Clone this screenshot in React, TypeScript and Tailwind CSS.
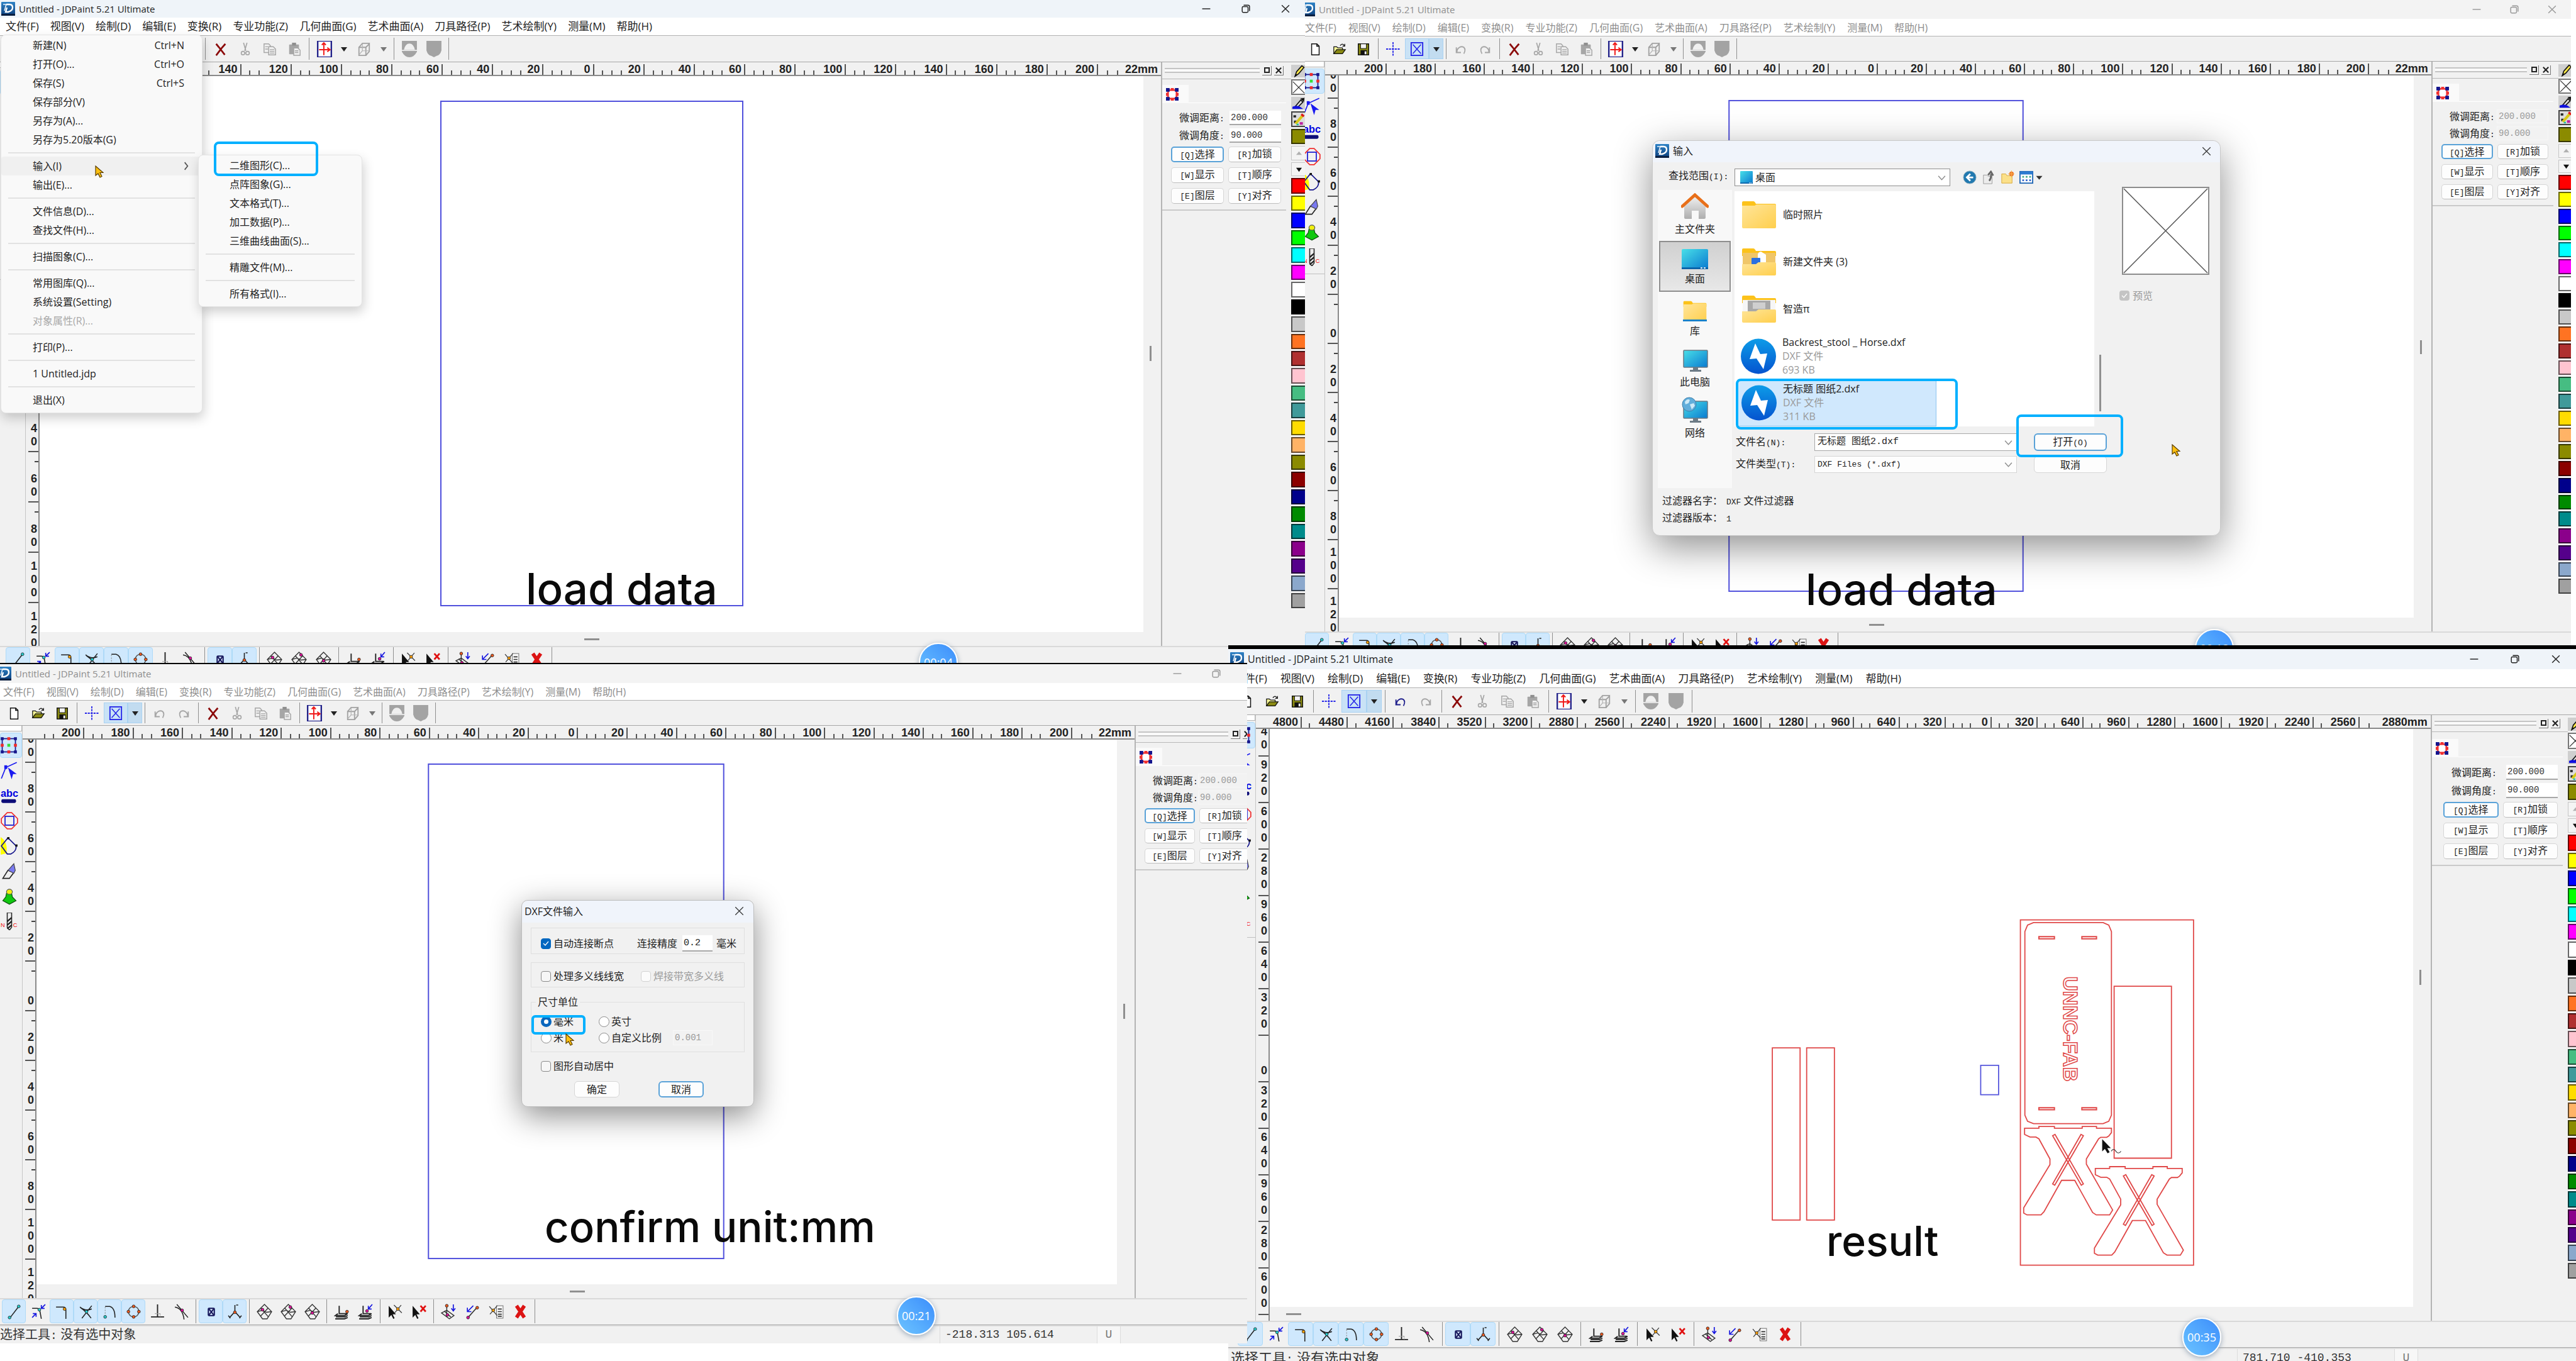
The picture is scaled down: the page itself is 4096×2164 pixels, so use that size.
import React, { ReactNode } from "react";

/* ---------- fonts ---------- */

const UI = "font-['Open_Sans','Noto_Sans_CJK_SC',sans-serif]";
const SIM = "font-['Liberation_Sans','Noto_Sans_CJK_SC',sans-serif]";

const Mono = ({ children, big }: { children: ReactNode; big?: boolean }) => (
  <span className={`font-['Liberation_Mono',monospace] ${big ? "text-[18px]" : "text-[13px]"}`}>{children}</span>
);

/* ---------- icons ---------- */

const Svg = ({ size, children, className = "" }: { size: number; children: ReactNode; className?: string }) => (
  <svg width={size} height={size} viewBox="0 0 24 24" fill="none" className={`shrink-0 ${className}`} aria-hidden="true">
    {children}
  </svg>
);

const Logo = () => (
  <svg width="22" height="22" viewBox="0 0 22 22" className="shrink-0" aria-hidden="true">
    <defs>
      <linearGradient id="logo" x1="0" y1="0" x2="0" y2="1">
        <stop offset="0" stopColor="#2f83c6" />
        <stop offset="1" stopColor="#0d3f7c" />
      </linearGradient>
    </defs>
    <rect width="22" height="22" rx="1" fill="url(#logo)" />
    <path d="M8 4h5q5 0 5 5t-7 7H7l2-7" fill="none" stroke="#fff" strokeWidth="2.400" />
    <path d="M3 4h5L5 14" fill="none" stroke="#e8f2fb" strokeWidth="1.600" />
    <rect y="19" width="22" height="3" fill="#0a1f40" />
  </svg>
);

const Pointer = ({ className = "" }: { className?: string }) => (
  <svg width="14" height="20" viewBox="0 0 14 20" className={`absolute ${className}`} aria-hidden="true">
    <path d="M1 1v15l4-3 3 6 3-1.500-3-6h5z" fill="#fdc010" stroke="#5a3d00" strokeWidth="1.200" />
  </svg>
);

const topIcons: Record<string, ReactNode> = {
  new: (
    <>
      <path d="M5 3h9l4 4v15H5z" fill="#fff" stroke="#111" strokeWidth="1.600" />
      <path d="M14 3v4h4" stroke="#111" strokeWidth="1.600" />
    </>
  ),
  open: (
    <>
      <path d="M2 20V8h5l2 2h8v3" fill="#ffff9a" stroke="#111" strokeWidth="1.400" />
      <path d="M2 20l5-7h15l-5 7z" fill="#8b8b12" stroke="#111" strokeWidth="1.400" />
      <path d="M13 6q4-5 7 0m1-3v4h-4" stroke="#111" strokeWidth="1.400" />
    </>
  ),
  save: (
    <>
      <rect x="3" y="3" width="18" height="19" fill="#8b8b12" stroke="#111" strokeWidth="1.600" />
      <rect x="7" y="3" width="10" height="8" fill="#f4f4f4" stroke="#111" />
      <rect x="7" y="14" width="11" height="8" fill="#111" />
      <rect x="14" y="16" width="3" height="5" fill="#f4f4f4" />
    </>
  ),
  cross: <path d="M12 0v24M0 12h24" stroke="#2424e8" strokeWidth="2" strokeDasharray="3.500 1.500" />,
  box: (
    <>
      <rect x="2" y="1" width="20" height="22" stroke="#2424e8" strokeWidth="2" />
      <path d="M5 4l14 16M19 4L5 20" stroke="#2424e8" strokeWidth="1.600" />
    </>
  ),
  undo: <path d="M4 9v9h8M5 17C5 10 12 6 17 9q4 4 0 11" stroke="currentColor" strokeWidth="2" />,
  redo: <path d="M20 9v9h-8M19 17C19 10 12 6 7 9q-4 4 0 11" stroke="currentColor" strokeWidth="2" />,
  del: <path d="M4 3l5 6 10 13M20 3l-7 8-9 12" stroke="#8b0a0a" strokeWidth="3" />,
  cut: (
    <>
      <path d="M9 1l4 14M15 1l-4 14" stroke="#a6a6a6" strokeWidth="1.800" />
      <circle cx="8" cy="19" r="3" stroke="#a6a6a6" strokeWidth="1.800" />
      <circle cx="16" cy="19" r="3" stroke="#a6a6a6" strokeWidth="1.800" />
    </>
  ),
  copy: (
    <>
      <path d="M2 3h8l3 3v12H2z" fill="#f0f0f0" stroke="#a6a6a6" strokeWidth="1.600" />
      <path d="M10 8h8l4 4v10H10z" fill="#f0f0f0" stroke="#a6a6a6" strokeWidth="1.600" />
      <path d="M4 8h5M4 12h5M12 13h8M12 16h8M12 19h8" stroke="#a6a6a6" strokeWidth="1.400" />
    </>
  ),
  paste: (
    <>
      <rect x="3" y="4" width="17" height="17" rx="1" fill="#a6a6a6" />
      <rect x="8" y="1" width="7" height="5" fill="#8f8f8f" />
      <path d="M11 10h7l4 4v9H11z" fill="#f0f0f0" stroke="#a6a6a6" strokeWidth="1.600" />
      <path d="M13 15h6M13 18h6" stroke="#a6a6a6" strokeWidth="1.400" />
    </>
  ),
  view: (
    <>
      <rect x="2" y="0" width="20" height="24" fill="#fff" stroke="#23238a" strokeWidth="2.200" />
      <path d="M11 21V3M8 6l3-3 3 3M4 13h15M16 10l4 3-4 3" stroke="#f01818" strokeWidth="1.800" />
    </>
  ),
  cube: (
    <>
      <path d="M3 9h12v14H3zM15 9l6-6v13l-6 7M3 9l6-7h12" stroke="#a2a2a2" strokeWidth="2" />
      <path d="M9 3v12M9 15h12M9 15l-6 7" stroke="#b4b4b4" strokeWidth="1.300" />
    </>
  ),
  shieldA: (
    <>
      <path d="M1 0h22v16q-4 8-11 8T1 16z" fill="#a3a3a3" />
      <path d="M4 13q2-9 8-9t8 9z" fill="#f0f0f0" />
      <path d="M0 14h24" stroke="#f0f0f0" strokeWidth="1.500" />
    </>
  ),
  shieldB: <path d="M1 0h22v14q-2 7-7 8l-4 2-4-2q-5-1-7-8z" fill="#a3a3a3" />,
};

const Dot = ({ x, y, c }: { x: number; y: number; c: string }) => (
  <circle cx={x} cy={y} r="2.200" fill={c} stroke="#222" strokeWidth="0.800" />
);

const gridLines = <path d="M12 1l11 11-7 11h-7L1 12zM6 6l12 14M18 6L6 19M1 12l8-2 6 3 8-1" stroke="#333" strokeWidth="1.300" />;
const sheet = <path d="M8 3v12h12M6 15l-4 3h14l5-3M3 20h14l4-2M2 23h14l5-2" stroke="#222" strokeWidth="1.800" />;
const blackArrow = <path d="M2 3v18l4-4 3 6 2-1-3-6h5z" fill="#111" />;

const snapIcons: ReactNode[] = [
  <><path d="M6 21L19 4" stroke="#222" strokeWidth="1.500" /><Dot x={19} y={4} c="#25d0d0" /><Dot x={5} y={21} c="#25d0d0" /></>,
  <><path d="M3 7h7q4 0 5 5l2 11" stroke="#222" strokeWidth="1.500" /><Dot x={14} y={9} c="#25d0d0" /><path d="M23 1l-6 6M17 2v5h5M3 21l6-6M4 15h5v5" stroke="#1717e0" strokeWidth="1.600" /></>,
  <><path d="M3 5h11q4 0 4 5v13" stroke="#222" strokeWidth="1.500" /><Dot x={16} y={8} c="#ffa000" /></>,
  <><path d="M3 5q8 7 18 3M21 3L6 22M4 6q9 6 16 16" stroke="#222" strokeWidth="1.500" /><Dot x={13} y={12} c="#25d0d0" /></>,
  <><path d="M5 4h7q8 2 8 17" stroke="#222" strokeWidth="1.500" /><path d="M5 5v15" stroke="#888" strokeDasharray="2 2" /><Dot x={5} y={20} c="#25d0d0" /></>,
  <><circle cx="12" cy="12" r="8" stroke="#555" strokeWidth="1.400" /><Dot x={12} y={4} c="#f05a1e" /><Dot x={12} y={20} c="#f05a1e" /><Dot x={4} y={12} c="#f05a1e" /><Dot x={20} y={12} c="#f05a1e" /></>,
  <><path d="M12 1v19M2 20h20" stroke="#222" strokeWidth="1.800" /><path d="M16 15v5M8 15h8" stroke="#999" strokeDasharray="2 1" /></>,
  <><path d="M2 5q12 2 14 19M5 1l17 20" stroke="#222" strokeWidth="1.400" /><Dot x={13} y={10} c="#e0109a" /></>,
  <><rect x="8" y="7" width="9" height="11" rx="1" fill="#dcecff" stroke="#15155a" strokeWidth="2" /><path d="M9 8l7 9M16 8l-7 9" stroke="#15155a" strokeWidth="2" /></>,
  <><path d="M12 12V2M12 12l-8 9M12 12l8 9M14 2h3M2 18l3 4M22 18l-3 4" stroke="#222" strokeWidth="1.500" /><Dot x={12} y={13} c="#f05a1e" /></>,
  <>{gridLines}<Dot x={9} y={9} c="#e0109a" /></>,
  <>{gridLines}<Dot x={15} y={5} c="#e0109a" /></>,
  <>{gridLines}<Dot x={12} y={14} c="#e0109a" /></>,
  <>{sheet}<Dot x={20} y={12} c="#f05a1e" /></>,
  <>{sheet}<Dot x={14} y={11} c="#e0109a" /><path d="M22 1l-6 7M16 3v5h5" stroke="#1717e0" strokeWidth="1.600" /></>,
  <>{blackArrow}<path d="M10 2l12 12M21 2L11 14" stroke="#444" strokeWidth="1.300" /><Dot x={16} y={8} c="#ffa000" /></>,
  <>{blackArrow}<path d="M14 3l8 9M22 3l-8 9" stroke="#e01010" strokeWidth="2.600" /></>,
  <><path d="M1 14l8-4 11 8-7 5zM9 3v17M5 11l10 9" stroke="#333" strokeWidth="1.400" /><Dot x={9} y={3} c="#f05a1e" /><Dot x={10} y={17} c="#e0109a" /><path d="M19 1v9M16 7l3 4 3-4" stroke="#1717e0" strokeWidth="1.600" /></>,
  <><path d="M5 21L20 4" stroke="#333" strokeWidth="1.500" /><Dot x={5} y={21} c="#e0109a" /><Dot x={19} y={6} c="#f05a1e" /><path d="M13 3L4 12M4 6v6h6" stroke="#1717e0" strokeWidth="1.600" /></>,
  <><rect x="12" y="3" width="10" height="19" fill="#f8f8f8" stroke="#777" /><path d="M14 8h6M14 12h6M14 16h6M14 19h6" stroke="#333" strokeWidth="1.600" /><path d="M1 4l12 14M13 3L2 16" stroke="#444" strokeWidth="1.300" /><Dot x={7} y={10} c="#ffa000" /></>,
  <path d="M6 3l12 18M18 3L6 21" stroke="#dc1414" strokeWidth="5.500" />,
];

const toolIcons: ReactNode[] = [
  <><rect x="3" y="3" width="18" height="18" stroke="#16168c" strokeWidth="1.500" />{[[3, 3], [21, 3], [3, 21], [21, 21]].map(([x, y]) => <rect key={`${x}${y}`} x={x - 2} y={y - 2} width="4" height="4" fill="#16168c" />)}{[[12, 3], [12, 21], [3, 12], [21, 12]].map(([x, y]) => <rect key={`${x}${y}`} x={x - 2} y={y - 2} width="4" height="4" fill="#f02a2a" />)}<rect x="10" y="10" width="4" height="4" fill="#35e035" /></>,
  <><path d="M1 23L7 8 22 1" stroke="#1a1af0" strokeWidth="1.400" /><rect x="5" y="5" width="4" height="5" fill="#1a1af0" /><path d="M10 8l12 9-5 0-2 7z" fill="#1a1af0" /></>,
  <><text x="0" y="14" fontFamily="Liberation Sans" fontWeight="700" fontSize="14" fill="#0000e0">abc</text><rect x="1" y="17" width="20" height="5" rx="2" fill="#0d0d78" /></>,
  <><path d="M9 1h6l8 8v6l-8 8H9l-8-8V9z" stroke="#f03030" strokeWidth="1.500" /><rect x="6" y="6" width="12" height="12" stroke="#1c1cd0" strokeWidth="1.500" /></>,
  <><path d="M0 0q10 6 8 22L0 24z" fill="#ffff00" /><path d="M1 12L10 1l11 11q1 7-7 11h-5z" stroke="#15158c" strokeWidth="1.500" /><rect x="9" y="0" width="3" height="3" fill="#111" /><rect x="20" y="10" width="3" height="3" fill="#111" /></>,
  <><path d="M3 22l7-11 8 3-6 8z" fill="#eee" stroke="#222" strokeWidth="1.400" /><path d="M10 11l8-9 2 9-2 4z" fill="#7a7af0" stroke="#444" /></>,
  <><path d="M8 8h7l1 5 5 5-9 5-9-5 4-5z" fill="#10c810" stroke="#0a500a" /><ellipse cx="12" cy="6" rx="4" ry="3.500" fill="#f0f010" stroke="#555" /></>,
  <><path d="M9 0h6v20l-3 4-3-4z" fill="#eee" stroke="#222" strokeWidth="1.300" /><path d="M9 12l6-5M9 17l6-5M9 22l6-5" stroke="#222" strokeWidth="2" /><text x="0" y="20" fontSize="8" fontFamily="Liberation Sans" fill="#f01010">N</text><text x="17" y="20" fontSize="8" fontFamily="Liberation Sans" fill="#f01010">C</text></>,
];

const palette = [
  "#8b8b00", "up", "down", "#ff0000", "#ffff00", "#0000ff", "#00ff00", "#00ffff", "#ff00ff", "#ffffff", "#000000", "#c8c8c8",
  "#ff7322", "#b03030", "#ffc4d0", "#46bd82", "#409a9a", "#ffdc00", "#ffb366", "#8b8b00", "#8b0000", "#00008b",
  "#008b00", "#008b8b", "#8b008b", "#55008b", "#8ba8cc", "#a0a0a0",
];

/* ---------- window chrome ---------- */

const menus = ["文件(F)", "视图(V)", "绘制(D)", "编辑(E)", "变换(R)", "专业功能(Z)", "几何曲面(G)", "艺术曲面(A)", "刀具路径(P)", "艺术绘制(Y)", "测量(M)", "帮助(H)"];

const TitleBar = ({ active, fade, cls }: { active: boolean; fade: string; cls: string }) => (
  <header className={`flex h-(--title) shrink-0 items-center ${active ? "bg-[#eff4f9]" : "bg-[#f3f3f3]"}`}>
    <div className={`flex items-center ${cls}`}>
      <Logo />
      <h1 className={`ml-[6px] leading-5 whitespace-nowrap ${fade}`}>Untitled - JDPaint 5.21 Ultimate</h1>
    </div>
    <div className={`ml-auto flex h-full ${active ? "text-[#222]" : "text-[#999]"}`}>
      <button aria-label="最小化" className="grid w-(--wb) place-items-center"><Svg size={14}><path d="M1 12h22" stroke="currentColor" strokeWidth="2.500" /></Svg></button>
      <button aria-label="还原" className="grid w-(--wb) place-items-center"><Svg size={14}><rect x="2" y="6" width="16" height="16" rx="3" stroke="currentColor" strokeWidth="2.500" /><path d="M6 2h12q4 0 4 4v12" stroke="currentColor" strokeWidth="2.500" /></Svg></button>
      <button aria-label="关闭" className="grid w-(--wb) place-items-center"><Svg size={14}><path d="M2 2l20 20M22 2L2 22" stroke="currentColor" strokeWidth="2.500" /></Svg></button>
    </div>
  </header>
);

const MenuBar = ({ fade, cls }: { fade: string; cls: string }) => (
  <div className="flex h-(--menu) shrink-0 items-center bg-white">
    <nav className={`flex items-center ${cls} ${fade}`}>
      {menus.map((m) => (
        <button key={m} className="px-[9px] leading-6 whitespace-nowrap">{m}</button>
      ))}
    </nav>
  </div>
);

const Sep = () => (
  <span className="grid h-full w-(--sep) shrink-0 place-items-center"><span className="h-full w-px bg-[#8f8f8f]" /></span>
);

const TB = ({ name, label, on, tone = "text-[#a6a6a6]" }: { name: string; label: string; on?: boolean; tone?: string }) => (
  <button aria-label={label} className={`grid h-full w-(--btn) shrink-0 place-items-center ${tone} ${on ? "border border-[#a9d2f2] bg-[#c9e2f6]" : ""}`}>
    <Svg size={name.startsWith("shield") || name === "view" ? 26 : 22}>{topIcons[name]}</Svg>
  </button>
);

const DD = ({ on, dim }: { on?: boolean; dim?: boolean }) => (
  <button aria-label="更多" className={`grid h-full w-(--dd) shrink-0 place-items-center ${on ? "border border-[#a9d2f2] bg-[#c2dcf0]" : ""}`}>
    <Svg size={12}><path d="M2 6h20L12 20z" fill={dim ? "#777" : "#222"} /></Svg>
  </button>
);

const Toolbar = ({ undo, pad }: { undo?: boolean; pad: string }) => (
  <div className={`flex h-(--tool) shrink-0 items-center border-y border-t-[#b2b2b2] border-b-[#a6a6a6] bg-[#f1f1f1] py-[3px] ${pad}`}>
    <TB name="new" label="新建" /><TB name="open" label="打开" /><TB name="save" label="保存" /><Sep />
    <TB name="cross" label="光标" /><TB name="box" label="捕捉框" on /><DD on /><Sep />
    <TB name="undo" label="撤销" tone={undo ? "text-[#20208c]" : "text-[#a6a6a6]"} /><TB name="redo" label="重做" /><Sep />
    <TB name="del" label="删除" /><TB name="cut" label="剪切" /><TB name="copy" label="复制" /><TB name="paste" label="粘贴" /><Sep />
    <TB name="view" label="观察" /><DD /><TB name="cube" label="三维" /><DD dim /><Sep />
    <TB name="shieldA" label="加工" /><TB name="shieldB" label="模型" /><Sep />
  </div>
);

const SnapBar = ({ pad }: { pad: string }) => {
  const on = [0, 2, 3, 4, 5, 8, 9];
  const before = [8, 10, 13, 15, 17];
  return (
    <div className={`flex h-[43px] shrink-0 items-center border-t-2 border-b border-t-[#d9d9d9] border-b-[#a6a6a6] bg-[#f1f1f1] pb-[2px] ${pad}`}>
      {snapIcons.map((ic, i) => (
        <React.Fragment key={i}>
          {before.includes(i) && <Sep />}
          <button aria-label={`捕捉 ${i + 1}`} className={`grid h-[38px] w-(--btn) shrink-0 place-items-center rounded-sm ${on.includes(i) ? "border border-[#aedaf8] bg-[#cfe8fd]" : ""}`}>
            <Svg size={25}>{ic}</Svg>
          </button>
        </React.Fragment>
      ))}
      <Sep />
    </div>
  );
};

const ToolColumn = () => (
  <aside className="flex w-(--side) shrink-0 flex-col border-r border-[#c6c6c6] bg-[#f1f1f1]">
    <div className="h-[9px] shrink-0 border-r border-b border-[#b5b5b5] bg-white" />
    <div className="flex flex-col border-b border-[#c0c0c0] pt-[2px] pb-[6px]">
      {toolIcons.map((ic, i) => (
        <button key={i} aria-label={`工具 ${i + 1}`} className={`flex h-(--tp) items-center justify-end rounded-sm pr-[6px] ${i === 0 ? "border border-[#aedaf8] bg-[#cfe8fd]" : ""}`}>
          <Svg size={28}>{ic}</Svg>
        </button>
      ))}
    </div>
  </aside>
);

const HSeg = ({ label, first }: { label: string; first?: boolean }) => {
  const ticks = label.length > 3 ? 1 : label.length > 2 ? 2 : 3;
  const shown = first ? (label.length > 3 ? 0 : 2) : ticks;
  return (
    <div className={`flex h-[17px] min-w-0 items-end border-r-2 border-[#555] pr-[4px] ${first ? "w-(--first) shrink-0" : "flex-1"}`}>
      {Array.from({ length: shown }, (_, i) => (
        <span key={i} className="h-[7px] w-1/5 shrink-0 border-r-2 border-[#555]" />
      ))}
      <span className="ml-auto">{label}</span>
    </div>
  );
};

const HRuler = ({ labels, cropFirst, end }: { labels: string[]; cropFirst?: boolean; end: string }) => (
  <div className="flex h-(--ruler) shrink-0 items-end border-b-2 border-[#8a8a8a] bg-[#f1f1f1] pl-[22px] font-['Liberation_Sans',sans-serif] text-[18px] leading-[17px] font-bold text-[#222]">
    {labels.map((l, i) => <HSeg key={i} label={l} first={cropFirst && i === 0} />)}
    <div className="flex h-[17px] w-(--tail) shrink-0 items-end pr-[5px]">
      <span className="h-[7px] w-[16px] border-r-2 border-[#555]" />
      {end.length < 5 && <span className="h-[7px] w-[16px] border-r-2 border-[#555]" />}
      <span className="ml-auto">{end}</span>
    </div>
  </div>
);

const VRuler = ({ labels, dots }: { labels: string[]; dots?: boolean }) => (
  <div className="flex w-[22px] shrink-0 flex-col overflow-hidden border-r-2 border-[#8a8a8a] bg-[#f1f1f1] font-['Liberation_Sans',sans-serif] text-[18px] leading-[21px] font-bold text-[#222]">
    {labels.map((l, i) => (
      <div key={i} className={`flex shrink-0 flex-col items-end justify-end ${i === 0 ? "h-(--v0) overflow-hidden" : "h-(--seg)"}`}>
        {i > 0 && !dots && l.length < 3 && <span className="mb-auto h-[16px] w-[6px] border-b-2 border-[#444]" />}
        {l.split("").map((d, j) => <span key={j} className="pr-[2px]">{d}</span>)}
        <span className={`w-[16px] shrink-0 border-b-2 border-[#555] ${dots ? "h-[8px]" : "h-[6px]"}`} />
      </div>
    ))}
  </div>
);

const P = ({ k, name }: { k: string; name: string }) => (
  <button className="h-(--pb) rounded-[5px] border border-[#d6d6d6] border-b-[#bdbdbd] bg-[#fdfdfd] text-[16px] leading-5 whitespace-nowrap text-[#222] data-[on=true]:border-2 data-[on=true]:border-[#5aa2d8]" data-on={k === "Q"}>
    <Mono>[{k}]</Mono>{name}
  </button>
);

const Field = ({ label, value, id, dim }: { label: string; value: string; id: string; dim?: boolean }) => (
  <div className="flex h-(--pr) items-center justify-between pl-[13px]">
    <label htmlFor={id} className="text-[16px] whitespace-nowrap text-[#222]">{label}<Mono>:</Mono></label>
    <input id={id} defaultValue={value} className={`h-full w-[82px] pl-[2px] font-['Liberation_Mono',monospace] text-[14px] ${dim ? "border border-[#f7f7f7] bg-[#f2f2f2] text-[#9a9a9a]" : "border-b-2 border-[#a8a8a8] bg-white text-[#333]"}`} />
  </div>
);

const Panel = ({ id, dim }: { id: string; dim?: boolean }) => (
  <aside className="flex w-(--panel) shrink-0 flex-col border-l-2 border-[#b4b4b4] bg-[#f1f1f1]">
    <div className="flex h-[27px] items-center gap-1 border-b border-[#b8b8b8] pr-[12px] pl-1">
      <span className="h-[8px] flex-1 border-y-2 border-[#c4c4c4] bg-[#fafafa]" />
      <button aria-label="浮动" className="grid h-[15px] w-[15px] place-items-center border-r border-b border-[#777]"><span className="h-[9px] w-[9px] border-2 border-[#222]" /></button>
      <button aria-label="关闭面板" className="grid h-[15px] w-[15px] place-items-center border-r border-b border-[#777]"><Svg size={10}><path d="M2 2l20 20M22 2L2 22" stroke="#222" strokeWidth="5" /></Svg></button>
    </div>
    <div className="flex h-(--tab) items-end pr-[8px]">
      <button aria-label="选择面板" className="grid h-[29px] w-[42px] place-items-center bg-[#fafafa] pr-[10px]">
        <Svg size={20}><rect x="4" y="4" width="16" height="16" fill="#fff" stroke="#f03030" strokeWidth="3" />{[[0, 0], [17, 0], [0, 17], [17, 17]].map(([x, y]) => <rect key={`${x}-${y}`} x={x} y={y} width="7" height="7" fill="#14148c" />)}<path d="M9 2h6M9 22h6M2 9v6M22 9v6" stroke="#f03030" strokeWidth="4" /></Svg>
      </button>
      <span className="h-px flex-1 bg-white" />
    </div>
    <div className="mr-[8px] flex flex-col gap-[5px] border-b-2 border-[#cacaca] pt-[12px] pr-[8px] pb-[9px] pl-(--pl)">
      <Field id={`${id}-dist`} label="微调距离" value="200.000" dim={dim} />
      <Field id={`${id}-ang`} label="微调角度" value="90.000" dim={dim} />
      <div className="mt-px grid grid-cols-2 gap-x-[7px] gap-y-2">
        <P k="Q" name="选择" /><P k="R" name="加锁" /><P k="W" name="显示" /><P k="T" name="顺序" /><P k="E" name="图层" /><P k="Y" name="对齐" />
      </div>
    </div>
  </aside>
);

const Palette = () => (
  <div className="w-(--pal) shrink-0 overflow-hidden bg-[#f1f1f1] pt-[4px]">
    <div className="flex h-(--ph) w-[24px] flex-col gap-[3px]">
      <button aria-label="铅笔" className="grid flex-1 place-items-center bg-[#cfcfcf]"><Svg size={20}><path d="M5 22L8 13 18 2l4 3L12 17z" fill="#ffe94a" stroke="#111" strokeWidth="2" /><path d="M5 22l1-5 4 2z" fill="#111" /></Svg></button>
      <button aria-label="无颜色" className="grid flex-1 place-items-center border-2 border-[#777] bg-white"><Svg size={20}><path d="M1 1l22 22M23 1L1 23" stroke="#333" strokeWidth="1.500" /></Svg></button>
      <button aria-label="取色" className="grid flex-1 place-items-center bg-[#cfcfcf]"><Svg size={20}><path d="M5 19L16 6l4 4L9 21z" fill="#ddd" stroke="#111" strokeWidth="2" /><path d="M15 3l7 7 1-8z" fill="#111" /><path d="M0 21q8-4 14 0z" stroke="#1010e0" strokeWidth="4" /></Svg></button>
      <button aria-label="调色" className="grid flex-1 place-items-center border-2 border-[#444] bg-[#ddd]"><Svg size={20}><path d="M2 4h5v4H2zM3 14h5v5H3z" fill="#222" /><path d="M6 20L20 4" stroke="#d8c818" strokeWidth="5" /><path d="M17 2l5 4" stroke="#e01818" strokeWidth="4" /><path d="M14 17h6v5h-6z" fill="#c020a0" /><path d="M8 20h4v3H8z" fill="#20c0a0" /></Svg></button>
      {palette.map((c, i) =>
        c === "up" || c === "down" ? (
          <button key={i} aria-label={c === "up" ? "向上" : "向下"} className="grid flex-1 place-items-center border border-[#c6c6c6] bg-[#f4f4f4]">
            <Svg size={11}><path d={c === "up" ? "M2 18h20L12 6z" : "M2 6h20L12 20z"} fill={c === "up" ? "#b0b0b0" : "#111"} /></Svg>
          </button>
        ) : (
          <button key={i} aria-label={`颜色 ${c}`} className="flex-1 border-2 border-[#000]/60" style={{ backgroundColor: c }} />
        ),
      )}
    </div>
  </div>
);

const Badge = ({ time, className }: { time: string; className: string }) => (
  <div className={`absolute grid h-[62px] w-[62px] place-items-center rounded-full border-2 border-white bg-linear-to-tr from-[#6cc4ff] to-[#3d8dfb] text-[18px] text-white shadow-[0_2px_8px_#9aa8b8] ${className}`}>
    {time}
  </div>
);

const Caption = ({ children, className }: { children: ReactNode; className: string }) => (
  <p className={`absolute font-['Inter',sans-serif] leading-[72px] font-medium whitespace-nowrap text-[#0a0a0a] ${className}`}>{children}</p>
);

type WinProps = {
  id: string; active: boolean; titleCls: string; menuCls: string; vars: string; toolPad: string; snapPad: string; undo?: boolean;
  h: string[]; hEnd: string; cropFirst?: boolean; v: string[]; dots?: boolean; canvas: ReactNode;
  thumbX: string; thumbY: string; status?: ReactNode; dim?: boolean;
};

const Win = (p: WinProps) => {
  const fade = p.active ? "text-[#222]" : "text-[#8e8e8e]";
  return (
    <div className={`flex flex-col bg-[#f1f1f1] [--ruler:22px] ${p.vars}`}>
      <TitleBar active={p.active} fade={fade} cls={p.titleCls} />
      <MenuBar fade={fade} cls={p.menuCls} />
      <Toolbar undo={p.undo} pad={p.toolPad} />
      <div className="flex min-h-0 flex-1">
        <ToolColumn />
        <main className="flex min-w-0 flex-1 flex-col">
          <HRuler labels={p.h} cropFirst={p.cropFirst} end={p.hEnd} />
          <div className="flex min-h-0 flex-1">
            <VRuler labels={p.v} dots={p.dots} />
            <div className="flex min-w-0 flex-1 flex-col">
              <div className="flex min-h-0 flex-1">
                <div className="relative min-w-0 flex-1 bg-white">{p.canvas}</div>
                <div className="flex w-[28px] shrink-0 flex-col items-center pr-[6px]">
                  <span className={`w-[3px] bg-[#8f8f8f] ${p.thumbY}`} />
                </div>
              </div>
              <div className="flex h-[22px] shrink-0 items-center">
                <span className={`h-[3px] bg-[#8f8f8f] ${p.thumbX}`} />
              </div>
            </div>
          </div>
        </main>
        <Panel id={p.id} dim={p.dim} />
        <Palette />
      </div>
      <SnapBar pad={p.snapPad} />
      {p.status}
    </div>
  );
};

const Status = ({ xy, size, h }: { xy: string; size: string; h: string }) => (
  <footer className={`flex ${h} shrink-0 items-center border-t-2 border-[#dedede] bg-[#f1f1f1] text-[#333] ${SIM}`}>
    <span className={`${size} whitespace-nowrap`}>选择工具<Mono big>:</Mono> 没有选中对象</span>
    <span className="ml-auto flex h-full w-[250px] items-center border-l border-[#dcdcdc] pl-[8px] whitespace-nowrap"><Mono big>{xy}</Mono></span>
    <span className="mr-(--st) grid h-full w-[38px] place-items-center border-x border-[#dcdcdc] bg-[#f7f7f7] text-[#777]"><Mono big>U</Mono></span>
  </footer>
);

/* ---------- file menu ---------- */

type Item = { t: string; k?: string; sub?: boolean; off?: boolean } | null;
const fileMenu: Item[] = [
  { t: "新建(N)", k: "Ctrl+N" }, { t: "打开(O)...", k: "Ctrl+O" }, { t: "保存(S)", k: "Ctrl+S" }, { t: "保存部分(V)" }, { t: "另存为(A)..." }, { t: "另存为5.20版本(G)" }, null,
  { t: "输入(I)", sub: true }, { t: "输出(E)..." }, null,
  { t: "文件信息(D)..." }, { t: "查找文件(H)..." }, null,
  { t: "扫描图象(C)..." }, null,
  { t: "常用图库(Q)..." }, { t: "系统设置(Setting)" }, { t: "对象属性(R)...", off: true }, null,
  { t: "打印(P)..." }, null, { t: "1 Untitled.jdp" }, null, { t: "退出(X)" },
];
const importMenu: Item[] = [
  { t: "二维图形(C)..." }, { t: "点阵图象(G)..." }, { t: "文本格式(T)..." }, { t: "加工数据(P)..." }, { t: "三维曲线曲面(S)..." }, null,
  { t: "精雕文件(M)..." }, null, { t: "所有格式(I)..." },
];

const MenuList = ({ items, className, pad }: { items: Item[]; className: string; pad: string }) => (
  <div role="menu" className={`absolute rounded-lg border border-[#e4e4e4] bg-[#f9f9f9] text-[16px] text-[#222] shadow-[2px_8px_18px_#00000030] ${className}`}>
    {items.map((it, i) =>
      it === null ? (
        <hr key={i} className="mx-[11px] my-[5px] border-t-2 border-[#e2e2e2]" />
      ) : (
        <button key={i} role="menuitem" className={`flex h-[30px] w-full items-center rounded pr-[28px] leading-6 ${pad} ${it.off ? "text-[#a9a9a9]" : ""} ${it.sub ? "bg-[#f0f0f0]" : ""}`}>
          {it.t}
          {it.k && <span className="ml-auto">{it.k}</span>}
          {it.sub && <Svg size={14} className="-mr-[10px] ml-auto"><path d="M8 2l8 10-8 10" stroke="#555" strokeWidth="3" /></Svg>}
        </button>
      ),
    )}
  </div>
);

/* ---------- file dialog ---------- */

const Folder = ({ w, h, kind = "" }: { w: number; h: number; kind?: string }) => (
  <svg width={w} height={h} viewBox="0 0 56 44" preserveAspectRatio="none" className="shrink-0" aria-hidden="true">
    <defs>
      <linearGradient id="fold" x1="0" y1="0" x2="1" y2="1"><stop offset="0" stopColor="#ffe59a" /><stop offset="1" stopColor="#ffcf4d" /></linearGradient>
    </defs>
    <path d="M1 9V3q0-2 2-2h16q2 0 4 4h30q2 0 2 2v6H1z" fill="#fcc21b" />
    {kind === "doc" && <rect x="2" y="8" width="52" height="18" fill="#f0c669" />}
    {kind === "pic" && <rect x="2" y="8" width="52" height="18" fill="#f6f6f6" />}
    {kind === "pic" && <rect x="10" y="9" width="36" height="18" fill="#a8a8a8" />}
    {kind === "pic" && <rect x="18" y="12" width="20" height="10" fill="#cfcfcf" />}
    {kind === "doc" && <path d="M26 24V11q0-4 5-5l8 5v13z" fill="#fff" />}
    {kind === "doc" && <rect x="16" y="16" width="14" height="10" rx="1" fill="#2a6fe0" />}
    {kind === "doc" || kind === "pic" ? <path d="M1 26h22l4-3h26q2 0 2 2v17q0 2-2 2H3q-2 0-2-2z" fill="url(#fold)" /> : <path d="M1 8h20l3-2h29q2 0 2 2v34q0 2-2 2H3q-2 0-2-2z" fill="url(#fold)" />}
    {kind === "lib" && <rect y="40" width="56" height="4" fill="#1b82c9" />}
  </svg>
);

const Desk = ({ w, h }: { w: number; h: number }) => (
  <svg width={w} height={h} viewBox="0 0 42 34" preserveAspectRatio="none" className="shrink-0" aria-hidden="true">
    <defs><linearGradient id="desk" x1="0" y1="0" x2="1" y2="1"><stop offset="0" stopColor="#48dfe8" /><stop offset="1" stopColor="#0a7ad0" /></linearGradient></defs>
    <rect width="42" height="34" rx="2" fill="url(#desk)" />
    <rect y="31" width="42" height="3" fill="#0b62a8" /><path d="M30 32h3M35 32h3" stroke="#fff" strokeWidth="2" />
  </svg>
);

const Pc = ({ globe }: { globe?: boolean }) => (
  <svg width="44" height={globe ? 42 : 36} viewBox={globe ? "0 -6 44 42" : "0 0 44 36"} className="shrink-0" aria-hidden="true">
    <rect x="4" y="1" width="38" height="27" rx="1" fill="url(#desk)" stroke="#6a7884" strokeWidth="1.500" />
    <path d="M19 28h8v4h5v3H14v-3h5z" fill="#6d7b86" />
    {globe && <circle cx="13" cy="6" r="11" fill="#62aedb" stroke="#3c80ad" />}
    {globe && <path d="M6 2q4-6 8-3l-2 5-5 2zM14 6l6-2 2 4-5 6z" fill="#cfeaf7" />}
  </svg>
);

const House = () => (
  <svg width="44" height="42" viewBox="0 0 44 42" className="shrink-0" aria-hidden="true">
    <defs><linearGradient id="wall" x1="0" y1="0" x2="0" y2="1"><stop offset="0" stopColor="#f1f1f1" /><stop offset="1" stopColor="#adadad" /></linearGradient></defs>
    <path d="M5 20L22 5l17 15v19q0 2-2 2h-9V28h-11v13H7q-2 0-2-2z" fill="url(#wall)" />
    <path d="M2 21L22 3l20 18" fill="none" stroke="#e8701a" strokeWidth="5" strokeLinecap="round" />
  </svg>
);

const Bolt = () => (
  <svg width="56" height="57" viewBox="0 0 56 57" className="shrink-0" aria-hidden="true">
    <defs><linearGradient id="bolt" x1="0" y1="0" x2="0" y2="1"><stop offset="0" stopColor="#0d9ce8" /><stop offset="1" stopColor="#0553cf" /></linearGradient></defs>
    <ellipse cx="28" cy="28.500" rx="28" ry="28" fill="url(#bolt)" />
    <path d="M23 8L14 33l11-1 11 17 6-25-11 1z" fill="#fff" />
  </svg>
);

const Chev = () => <Svg size={13} className="pointer-events-none mr-[6px] self-center justify-self-end [grid-area:1/1]"><path d="M2 7l10 11L22 7" stroke="#8a8a8a" strokeWidth="2.500" /></Svg>;

const places: [ReactNode, string][] = [
  [<House />, "主文件夹"],
  [<Desk w={42} h={32} />, "桌面"],
  [<Folder w={38} h={33} kind="lib" />, "库"],
  [<Pc />, "此电脑"],
  [<Pc globe />, "网络"],
];

const FileDialog = () => (
  <section role="dialog" aria-label="输入" className={`absolute top-[103px] left-[498px] flex h-[629px] w-[904px] flex-col rounded-xl border border-[#c9c9c9] bg-[#f1f1f1] text-[16px] leading-5 text-[#222] shadow-[0_18px_60px_#00000070] ${UI}`}>
    <header className="flex h-[34px] shrink-0 items-center rounded-t-xl bg-[#f0f4fb] pb-[2px] pl-[4px]">
      <Logo /><h2 className="ml-[6px]">输入</h2>
      <button aria-label="关闭" className="mr-[14px] ml-auto"><Svg size={15}><path d="M2 2l20 20M22 2L2 22" stroke="#333" strokeWidth="2" /></Svg></button>
    </header>
    <div className="flex min-h-0 flex-1">
      <div className="flex flex-col">
        <div className="flex h-[44px] items-center pt-[4px] pl-[25px]">
          <label htmlFor="look" className="w-[105px] pb-[4px]">查找范围<Mono>(I):</Mono></label>
          <div className="grid h-[28px] w-[343px] border border-[#8f8f8f] bg-white">
            <select id="look" className="appearance-none pl-[32px] [grid-area:1/1]"><option>桌面</option></select>
            <span className="pointer-events-none self-center pl-[8px] [grid-area:1/1]"><Desk w={20} h={20} /></span>
            <Chev />
          </div>
          <div className="ml-[20px] flex items-center gap-[8px]">
            <button aria-label="后退"><Svg size={22}><circle cx="12" cy="12" r="11" fill="#2179b0" stroke="#8ab" /><path d="M13 6l-6 6 6 6M7 12h11" stroke="#fff" strokeWidth="3" /></Svg></button>
            <button aria-label="向上"><Svg size={22}><path d="M3 8h6l2 2h7v13H3z" fill="#ececec" stroke="#999" /><path d="M13 18q4-4 3-12M11 8l5-6 4 7" stroke="#666" strokeWidth="3" /></Svg></button>
            <button aria-label="新建文件夹"><Svg size={22}><path d="M2 6h7l2 3h9v13H2z" fill="#fbe08a" stroke="#d8a93a" /><circle cx="19" cy="6" r="4" fill="#ee7a2e" /><path d="M19 0v12M13 6h12" stroke="#f6b24a" /></Svg></button>
            <button aria-label="查看" className="flex items-center"><Svg size={22}><rect x="1" y="2" width="22" height="20" fill="#fff" stroke="#1f66b5" strokeWidth="2" /><rect x="1" y="2" width="22" height="5" fill="#2c7bd0" /><path d="M5 11h3M11 11h3M17 11h3" stroke="#4a8" strokeWidth="3" /><path d="M5 17h3M11 17h3M17 17h3" stroke="#36c" strokeWidth="3" /></Svg><Svg size={11} className="ml-1"><path d="M1 6h22L12 19z" fill="#333" /></Svg></button>
          </div>
        </div>
        <div className="flex pl-[8px]">
          <nav className="flex h-[474px] w-[118px] flex-col bg-[#f8f8f8] px-[2px] text-center">
            {places.map(([ic, t]) => (
              <button key={t} className={`flex h-[81px] shrink-0 flex-col items-center justify-end gap-[5px] pb-[9px] ${t === "桌面" ? "border-2 border-[#8e8e8e] bg-linear-to-b from-[#d0d0d0] to-[#e8e8e8]" : ""}`}>{ic}<span>{t}</span></button>
            ))}
          </nav>
          <div className="ml-[4px] flex flex-col">
            <div className="mt-[2px] flex">
              <ul className="flex h-[374px] w-[572px] flex-col bg-white">
                {[["临时照片", ""], ["新建文件夹 (3)", "doc"], ["智造π", "pic"]].map(([t, k]) => (
                  <li key={t} className="flex flex-1 items-center gap-[10px] pb-[2px] pl-[11px]"><Folder w={56} h={44} kind={k} />{t}</li>
                ))}
                {[["Backrest_stool _ Horse.dxf", "693 KB"], ["无标题 图纸2.dxf", "311 KB"]].map(([t, s], i) => (
                  <li key={t} className={`ml-[5px] flex flex-1 items-center gap-[10px] pl-[5px] leading-[22px] ${i ? "w-[316px] border border-[#8cc4f0] bg-[#d0e8fd]" : ""}`}>
                    <Bolt /><div>{t}<div className="text-[#9a9a9a]">DXF 文件</div><div className="text-[#9a9a9a]">{s}</div></div>
                  </li>
                ))}
              </ul>
              <span className="mt-[260px] ml-[8px] h-[90px] w-[3px] bg-[#8f8f8f]" />
            </div>
            <div className="mt-[11px] flex items-center">
              <label htmlFor="fname" className="w-[127px] pl-[2px]">文件名<Mono>(N):</Mono></label>
              <div className="grid h-[28px] w-[322px] border border-[#a8a8a8] bg-white"><input id="fname" defaultValue="无标题 图纸2.dxf" className="w-full bg-transparent pl-[4px] font-['Liberation_Mono','Noto_Sans_CJK_SC',monospace] text-[15px] [grid-area:1/1]" /><Chev /></div>
              <button className="ml-[27px] h-[28px] w-[116px] rounded-md border-2 border-[#5aa2d8] bg-[#fdfdfd]">打开<Mono>(O)</Mono></button>
            </div>
            <div className="mt-[8px] flex items-center">
              <label htmlFor="ftype" className="w-[127px] pl-[2px]">文件类型<Mono>(T):</Mono></label>
              <div className="grid h-[27px] w-[322px] border border-[#d5d5d5] bg-[#fdfdfd]"><select id="ftype" className="w-full appearance-none pl-[4px] font-['Liberation_Mono',monospace] text-[13px] [grid-area:1/1]"><option>DXF Files (*.dxf)</option></select><Chev /></div>
              <button className="ml-[27px] h-[27px] w-[116px] rounded-md border border-[#d6d6d6] bg-[#fdfdfd]">取消</button>
            </div>
          </div>
        </div>
        <div className="mt-[8px] pl-[15px] leading-[24px]">
          <p>过滤器名字：<span className="pl-[6px]"><Mono>DXF</Mono> 文件过滤器</span></p>
          <p>过滤器版本：<span className="pl-[6px]"><Mono>1</Mono></span></p>
        </div>
      </div>
      <div className="-ml-[6px] flex flex-col pt-[39px]">
        <svg width="139" height="140" viewBox="0 0 139 140" className="ml-[30px] shrink-0" aria-hidden="true"><rect x="1" y="1" width="137" height="138" fill="#fff" stroke="#8c8c8c" strokeWidth="2" /><path d="M3 3l133 134M136 3L3 137" stroke="#555" strokeWidth="1.500" /></svg>
        <label className="mt-[23px] ml-[26px] flex items-center gap-[5px] text-[#999]">
          <span className="grid h-[16px] w-[16px]">
            <input type="checkbox" defaultChecked disabled className="h-full w-full appearance-none rounded-[4px] bg-[#c4c4c4] [grid-area:1/1]" />
            <Svg size={12} className="place-self-center [grid-area:1/1]"><path d="M4 12l6 6L20 6" stroke="#fff" strokeWidth="2.500" /></Svg>
          </span>
          预览
        </label>
      </div>
    </div>
    <span className="absolute top-[378px] left-[132px] h-[81px] w-[353px] rounded-lg border-4 border-[#00b0ff]" />
    <span className="absolute top-[435px] left-[578px] h-[68px] w-[170px] rounded-lg border-4 border-[#00b0ff]" />
    <Pointer className="top-[482px] left-[825px]" />
  </section>
);

/* ---------- DXF import dialog ---------- */

const Check = ({ label, on, dim }: { label: string; on?: boolean; dim?: boolean }) => (
  <label className={`flex items-center gap-[4px] whitespace-nowrap ${dim ? "text-[#9c9c9c]" : ""}`}>
    <span className="grid h-[17px] w-[16px]">
      <input type="checkbox" defaultChecked={on} disabled={dim} className={`h-full w-full appearance-none rounded-[4px] border [grid-area:1/1] ${on ? "border-[#0067c0] bg-[#0067c0]" : dim ? "border-[#d2d2d2] bg-[#fbfbfb]" : "border-[#8a8a8a] bg-[#f6f6f6]"}`} />
      {on && <Svg size={12} className="place-self-center [grid-area:1/1]"><path d="M4 12l6 6L20 6" stroke="#fff" strokeWidth="2.500" /></Svg>}
    </span>
    {label}
  </label>
);

const Radio = ({ label, on }: { label: string; on?: boolean }) => (
  <label className="flex items-center gap-[3px] whitespace-nowrap">
    <input type="radio" name="unit" defaultChecked={on} className={`h-[17px] w-[17px] appearance-none rounded-full bg-white ${on ? "border-[5px] border-[#0a67bd]" : "border border-[#8a8a8a]"}`} />
    {label}
  </label>
);

const DxfDialog = () => (
  <section role="dialog" aria-label="DXF文件输入" className={`absolute top-[255px] left-[771px] h-[329px] w-[370px] rounded-[10px] border border-[#bdbdbd] bg-[#f1f1f1] text-[16px] leading-5 text-[#222] shadow-[0_14px_50px_#00000075] ${UI}`}>
    <header className="flex h-[35px] items-center rounded-t-[10px] bg-[#f0f4fb] pb-[2px] pl-[4px]">
      <h2>DXF文件输入</h2>
      <button aria-label="关闭" className="mr-[15px] ml-auto"><Svg size={15}><path d="M2 2l20 20M22 2L2 22" stroke="#333" strokeWidth="2" /></Svg></button>
    </header>
    <div className="flex flex-col px-[14px] pt-[8px]">
      <div className="flex h-[42px] items-center border border-[#dfdfdf] pt-[8px] pr-[12px] pl-[15px]">
        <Check label="自动连接断点" on />
        <label htmlFor="prec" className="ml-auto">连接精度</label>
        <input id="prec" defaultValue="0.2" className="mr-[6px] ml-[8px] h-[26px] w-[48px] border-b-2 border-[#a8a8a8] bg-white pl-[2px] font-['Liberation_Mono',monospace] text-[15px]" />
        毫米
      </div>
      <div className="mt-[13px] flex h-[40px] items-center justify-between border border-[#dfdfdf] pt-[4px] pr-[32px] pl-[15px]">
        <Check label="处理多义线线宽" />
        <Check label="焊接带宽多义线" dim />
      </div>
      <fieldset className="mt-[13px] h-[90px] border border-[#dfdfdf] pl-[15px]">
        <legend className="-ml-[8px] px-[3px]">尺寸单位</legend>
        <div className="mt-[11px] grid grid-cols-[92px_1fr] gap-y-[4px]">
          <Radio label="毫米" on /><Radio label="英寸" />
          <Radio label="米" />
          <div className="flex items-center"><Radio label="自定义比例" />
            <input aria-label="自定义比例值" defaultValue="0.001" className="ml-[18px] h-[24px] w-[63px] border border-[#f8f8f8] bg-[#f2f2f2] pl-[2px] font-['Liberation_Mono',monospace] text-[14px] text-[#999]" />
          </div>
        </div>
      </fieldset>
      <div className="mt-[12px] pl-[16px]"><Check label="图形自动居中" /></div>
      <div className="mt-[14px] flex gap-[62px] pl-[69px]">
        <button className="h-[26px] w-[72px] rounded-md border border-[#d6d6d6] bg-[#fdfdfd]">确定</button>
        <button className="h-[26px] w-[72px] rounded-md border-2 border-[#5aa2d8] bg-[#fdfdfd]">取消</button>
      </div>
    </div>
    <span className="absolute top-[182px] left-[15px] h-[31px] w-[86px] rounded-md border-4 border-[#00b0ff]" />
    <Pointer className="top-[211px] left-[69px]" />
  </section>
);

/* ---------- canvas drawings ---------- */

const stand = "M940 911H988V904H1040V911H1133V904H1181V911H1231V928L1222 941L1215 946H1195L1188 952L1147 1030V1050L1235 1228L1225 1247H1180L1168 1238L1108 1113H1064L1005 1235L995 1247H948L937 1240V1220L1025 1052V1030L988 952L978 945H958L940 935ZM1034 940L1042 935L1137 1127L1130 1132ZM1137 940L1129 935L1034 1127L1041 1132Z";

const Result = () => (
  <svg viewBox="2019 1159 1817 918" className="h-full w-full" fill="none" role="img" aria-label="导入的图形">
    <g transform="matrix(.4744 0 0 .4097 2772.6 1420.1)" stroke="#e04848">
      <g className="[&>*]:[vector-effect:non-scaling-stroke]" strokeWidth="1.800">
        <path d="M926 103H1506V1442H926Z" />
        <path d="M970 113H1203L1222 123L1231 148V860L1222 884L1203 893H970L950 884L941 860V148L950 123Z" />
        <path d="M988 168h52v8h-52zM1132 168h49v8h-49zM988 831h52v8h-52zM1132 831h49v8h-49z" strokeWidth="2" />
        <path d="M1240 360H1432V1027H1240ZM95 599H188V1267H95ZM210 599H303V1267H210Z" />
        <path d={stand} />
        <path d={stand} transform="translate(237 156)" />
        <path d="M793 667H853V781H793Z" stroke="#5656dc" />
      </g>
      <path d="M1200 953v48l9-10 9 17 7-4-8-16h12z" fill="#111" stroke="none" />
      <path d="M1230 1000q8-14 16 0t17 0" stroke="#333" strokeWidth="2.500" />
    </g>
    <text transform="translate(3280 1552) rotate(90)" fontFamily="Liberation Sans" fontWeight="700" fontSize="32" fill="#fff" stroke="#e04848" strokeWidth="1.500">UNNC-FAB</text>
  </svg>
);

const Sheet = ({ view, x, y, w, h }: { view: string; x: number; y: number; w: number; h: number }) => (
  <svg viewBox={view} className="h-full w-full" fill="none" role="img" aria-label="图纸边框"><rect x={x} y={y} width={w} height={h} stroke="#5050dc" strokeWidth="2" /></svg>
);

const mm = ["200", "180", "160", "140", "120", "100", "80", "60", "40", "20", "0", "20", "40", "60", "80", "100", "120", "140", "160", "180", "200"];
const vm = ["00", "80", "60", "40", "20", "0", "20", "40", "60", "80", "100", "120"];
const wide = ["4800", "4480", "4160", "3840", "3520", "3200", "2880", "2560", "2240", "1920", "1600", "1280", "960", "640", "320", "0", "320", "640", "960", "1280", "1600", "1920", "2240", "2560"];
const tall = ["40", "920", "600", "280", "960", "640", "320", "0", "320", "640", "960", "280", "600", ""];

export default function App() {
  return (
    <div className={`grid h-screen w-full grid-cols-[1953fr_30fr_92fr_2013fr_8fr] grid-rows-[1026fr_28fr_1082fr_28fr] overflow-hidden bg-white ${UI}`}>
      <section className="relative col-start-1 col-end-4 row-start-1 row-end-3 min-h-0 min-w-0 overflow-hidden">
        <Win
          id="a" active titleCls="pl-[2px] text-[15px]" menuCls="text-[17px]" toolPad="pl-[7px]" snapPad="pl-[9px]"
          vars="h-[calc(100%+16px)] [--title:28px] [--menu:28px] [--tool:43px] [--btn:39px] [--dd:24px] [--sep:9px] [--side:41px] [--seg:80px] [--v0:38px] [--tail:100px] [--first:80px] [--panel:207px] [--pal:22px] [--wb:63px] [--tp:41px] [--pr:23px] [--pb:25px] [--tab:38px] [--pl:14px] [--ph:864px]"
          h={mm} hEnd="22mm" v={vm}
          thumbX="ml-[866px] w-[24px]" thumbY="mt-[429px] h-[24px]"
          canvas={<><Sheet view="63 121 1753 884" x={700} y={161} w={480} h={802} /><Caption className="top-[779px] left-[773px] text-[69px]">load data</Caption></>}
        />
        <MenuList items={fileMenu} pad="pl-[50px]" className="top-[55px] left-px w-[321px] pt-px pb-[5px]" />
        <MenuList items={importMenu} pad="pl-[49px]" className="top-[246px] left-[315px] w-[261px] pt-px pb-[5px]" />
        <span className="absolute top-[225px] left-[340px] h-[55px] w-[166px] rounded-lg border-4 border-[#00b0ff]" />
        <Pointer className="top-[263px] left-[151px]" />
        <Badge time="00:04" className="top-[1022px] left-[1461px]" />
      </section>

      <section className="relative col-start-4 col-end-5 row-start-1 row-end-2 min-h-0 min-w-0 overflow-hidden">
        <Win
          id="b" active={false} dim titleCls="-ml-px text-[15px]" menuCls="-ml-[4px] gap-px text-[16px]" toolPad="pl-[3px]" snapPad="pl-[5px]"
          vars="-ml-[5px] h-[calc(100%+21px)] [--title:30px] [--menu:27px] [--tool:41px] [--btn:38px] [--dd:23px] [--sep:9px] [--side:37px] [--seg:78px] [--v0:37px] [--tail:99px] [--first:76px] [--panel:202px] [--pal:20px] [--wb:60px] [--tp:40px] [--pr:22px] [--pb:24px] [--tab:37px] [--pl:14px] [--ph:842px]"
          h={mm} hEnd="22mm" cropFirst v={vm}
          thumbX="ml-[843px] w-[24px]" thumbY="mt-[421px] h-[22px]"
          canvas={
            <>
              <Sheet view="2129 119 1709 863" x={2749} y={159} w={468} h={781} />
              <FileDialog />
              <Caption className="top-[781px] left-[742px] text-[69px]">load data</Caption>
            </>
          }
        />
        <Badge time="00:13" className="top-[1000px] left-[1415px]" />
      </section>

      <section className="relative col-start-2 col-end-6 row-start-2 row-end-5 min-h-0 min-w-0 overflow-hidden border-t-[6px] border-black">
        <Win
          id="c" active undo titleCls="pl-[3px] text-[16px]" menuCls="gap-[3px] text-[17px]" toolPad="pl-[10px]" snapPad="pl-[15px]"
          vars="h-[calc(100%+10px)] [--title:32px] [--menu:29px] [--tool:44px] [--btn:40px] [--dd:24px] [--sep:10px] [--side:44px] [--seg:74px] [--v0:44px] [--tail:113px] [--first:51px] [--panel:218px] [--pal:13px] [--wb:65px] [--tp:42px] [--pr:24px] [--pb:25px] [--tab:40px] [--pl:18px] [--ph:892px] [--st:251px]"
          h={wide} hEnd="2880mm" cropFirst v={tall} dots
          thumbX="ml-[26px] w-[24px]" thumbY="mt-[383px] h-[24px]"
          canvas={<><Result /><Caption className="top-[778px] left-[885px] text-[66px]">result</Caption></>}
          status={<Status xy="781.710 -410.353" size="text-[22px] pl-[4px]" h="h-[31px]" />}
        />
        <Badge time="00:35" className="top-[1063px] left-[1517px]" />
      </section>

      <section className="relative col-start-1 col-end-3 row-start-3 row-end-4 min-h-0 min-w-0 overflow-hidden border-t-2 border-black">
        <Win
          id="d" active={false} dim titleCls="-ml-[4px] text-[15px]" menuCls="-ml-[4px] gap-px text-[16px]" toolPad="pl-[4px]" snapPad="pl-[3px]"
          vars="-mr-[44px] h-full [--title:30px] [--menu:27px] [--tool:41px] [--btn:38px] [--dd:23px] [--sep:9px] [--side:36px] [--seg:79px] [--v0:37px] [--tail:99px] [--first:76px] [--panel:199px] [--pal:24px] [--wb:62px] [--tp:40px] [--pr:22px] [--pb:24px] [--tab:37px] [--pl:14px] [--ph:850px] [--st:245px]"
          h={mm} hEnd="22mm" cropFirst v={vm}
          thumbX="ml-[848px] w-[24px]" thumbY="mt-[420px] h-[24px]"
          canvas={
            <>
              <Sheet view="58 1176 1718 867" x={681} y={1215} w={470} h={787} />
              <DxfDialog />
              <Caption className="top-[739px] left-[808px] text-[67px]">confirm unit:mm</Caption>
            </>
          }
          status={<Status xy="-218.313 105.614" size="text-[20px]" h="h-[29px]" />}
        />
        <Badge time="00:21" className="top-[1005px] left-[1426px]" />
      </section>
    </div>
  );
}
